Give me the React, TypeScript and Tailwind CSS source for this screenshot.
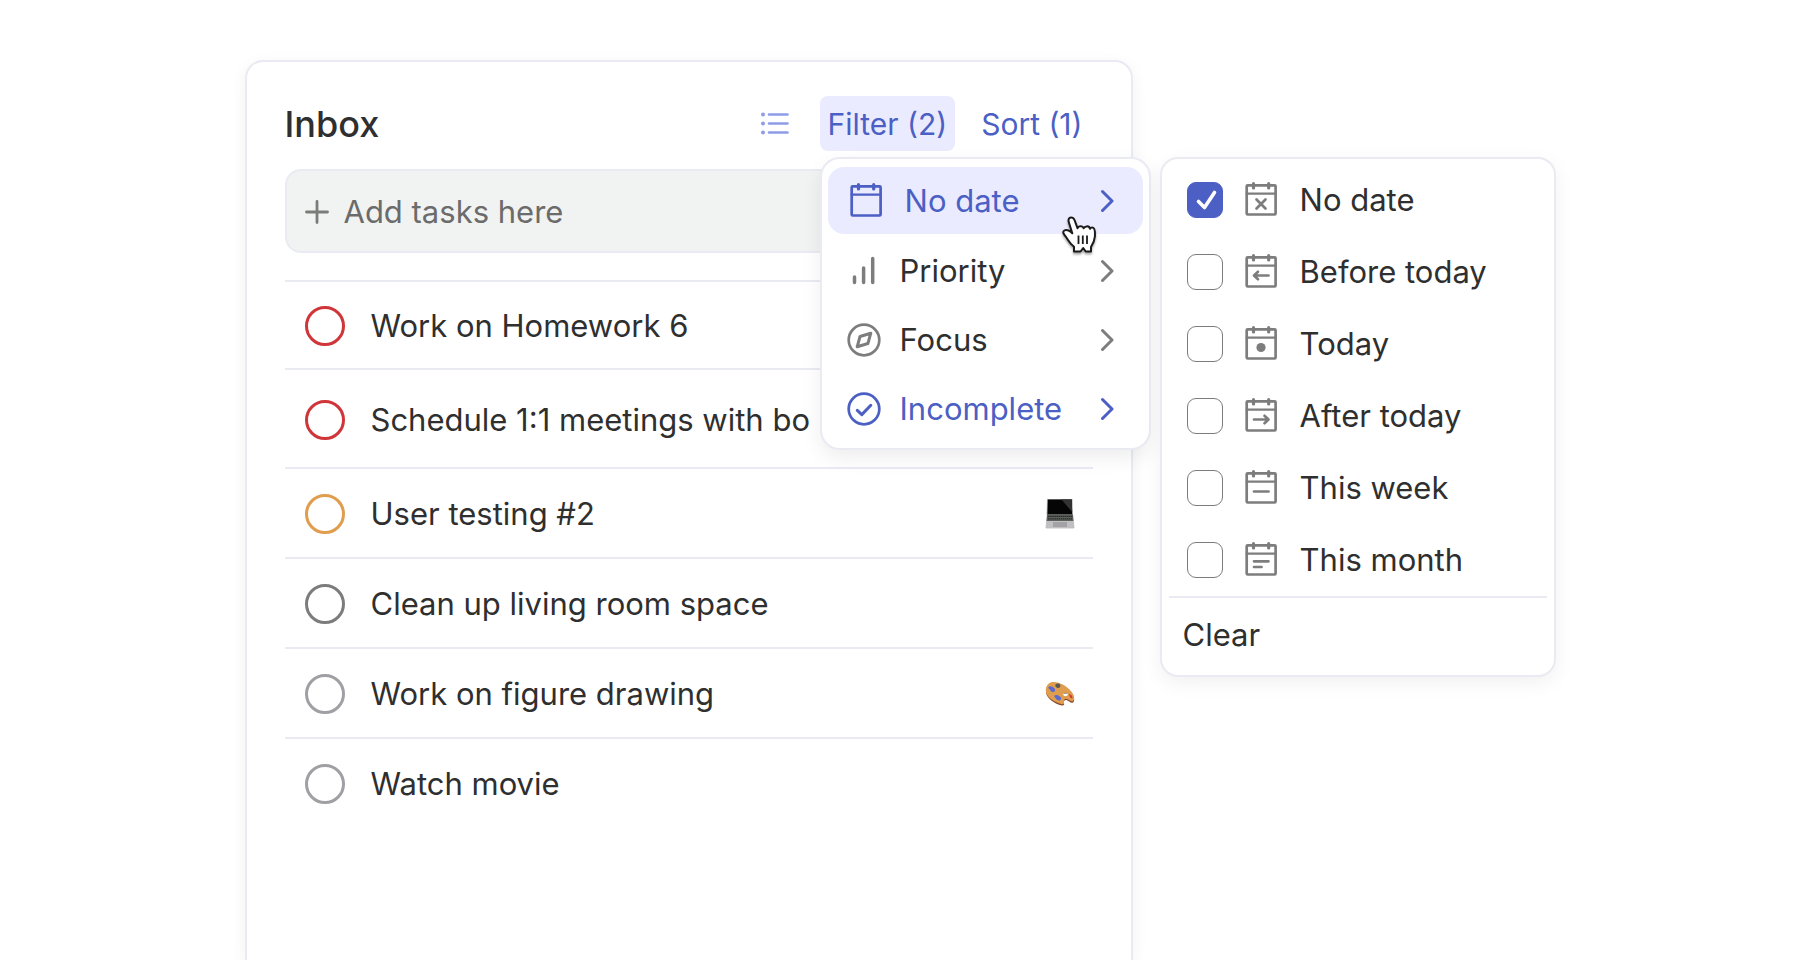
import { useState, type ReactNode } from "react";

type Task = { title: string; ring: string; height: string; tag?: ReactNode };

function LaptopIcon() {
  return (
    <svg viewBox="0 0 30 32" className="h-8 w-[30px]" aria-hidden="true">
      <path d="M2 1h25.500l.5 16H1.500z" fill="#b4b4b4" />
      <path d="M2.800 1.500h24l.4 15H2.400z" fill="#050505" />
      <path d="M16.500 1.500h10.300l.3 12.500z" fill="#333" />
      <path d="M2 16.500h26l.7 7H1.300z" fill="#5c605b" />
      <path d="M3 18.300h24M3 20.800h24" stroke="#2b2d2b" strokeWidth="1.200" strokeDasharray="1.600 .5" />
      <path d="M1.300 23h27.400l.8 7H.5z" fill="#c0c0c3" />
      <path d="M8 24h14v5H8z" fill="#a3a3a6" />
      <path d="M.5 30h29l-.8 1H1.300z" fill="#e3e3e4" />
    </svg>
  );
}

function PaletteIcon() {
  return (
    <svg viewBox="0 0 30 26" className="h-[26px] w-[30px]" aria-hidden="true">
      <path d="M1 10C0 16 9 23 17 24.500c2 .3 2.500-1 2-2.500-.6-2 .6-3.500 2.500-3 2 .8 4.500 3.500 6.500 2.500 2-1.200 1.500-6-1.500-10C22 5.500 14 1 7.500 1.800 4 2.300 1.400 5 1 10z" fill="#8a4a2a" />
      <path d="M.8 9C0 15 9 21.500 17 23.200c1.600.3 2.300-.6 2-2.200-.5-2.200.7-3.800 2.800-3 2 .7 4.500 3 6.200 2 2-1.300 1.300-5.500-1.500-9.200C22 5 14 .5 7.500 1 4 1.400 1.200 4.200.8 9z" fill="#df9d4d" />
      <ellipse cx="20.500" cy="13.500" rx="2.200" ry="1.700" fill="#fff" />
      <path d="M18.500 12.600c.6-1.300 3-1.300 4 0-1.300-.2-2.700-.3-4 0z" fill="#444" />
      <path d="M3.500 6c1.500-1.500 3.500-.5 5 .6 1.600 1.200 2.400 3.400.6 4.200-2 .8-3.300-.6-4-1.900-.7-1-2.400-1.800-1.600-2.900z" fill="#5a6bd0" />
      <path d="M9.500 14.500c1.500-1.200 3.800-.4 5.500 1 1.500 1.300 1.500 3.600-.4 3.900-2 .3-3-.6-3.700-1.900-.6-1-2.300-2-1.400-3z" fill="#5a6bd0" />
      <path d="M10.500 3.500c1-1.400 3.600-1.300 4.700.3.800 1.300-.2 3.200-2 3.200-1.900 0-3.500-1.900-2.700-3.500z" fill="#5b5a52" />
      <path d="M23.800 12.800l3 1.700.8 2.700-2.200-.3z" fill="#cf3b30" />
    </svg>
  );
}

type Mark = "none" | "x" | "left" | "dot" | "right" | "week" | "month";

const marks: Record<Mark, ReactNode> = {
  none: null,
  x: <path d="M11.500 18.500l9 9M20.500 18.500l-9 9" />,
  left: <path d="M9 22.500h14.500M13 18.800l-4 3.700 4 3.700" />,
  dot: <circle cx="16" cy="22.500" r="4.600" fill="currentColor" stroke="none" />,
  right: <path d="M9 22.500h14.500M19.500 18.800l4 3.700-4 3.700" />,
  week: <path d="M9 22.500h14.500" />,
  month: <path d="M9 20.300h14.500M9 26h7.500" />,
};

function CalendarIcon({ mark }: { mark: Mark }) {
  return (
    <svg
      viewBox="0 1 32 36"
      className="h-9 w-8 shrink-0"
      fill="none"
      stroke="currentColor"
      strokeWidth="2.700"
      strokeLinecap="round"
      strokeLinejoin="round"
      aria-hidden="true"
    >
      <rect x="1.700" y="4.300" width="28.900" height="29.200" rx="1" />
      <path d="M1.700 12.700h28.900" strokeWidth="2.300" />
      <path d="M8.500 2.700v4.300M23.700 2.700v4.300" strokeWidth="3.200" />
      {marks[mark]}
    </svg>
  );
}

function PriorityIcon() {
  return (
    <svg viewBox="0 0 34 34" className="size-[34px]" stroke="currentColor" strokeWidth="3.500" strokeLinecap="round" aria-hidden="true">
      <path d="M7.500 23v5.500M16.600 14v14.500M25.700 4.500v24" />
    </svg>
  );
}

function FocusIcon() {
  return (
    <svg viewBox="0 0 34 34" className="size-[34px]" fill="none" stroke="currentColor" strokeWidth="2.700" strokeLinejoin="round" aria-hidden="true">
      <circle cx="17" cy="17" r="15.300" />
      <path d="M10.200 23.800l2.800-10.300 10.800-3.300-2.900 10.300z" strokeWidth="3" />
    </svg>
  );
}

function DoneIcon() {
  return (
    <svg viewBox="0 0 34 34" className="size-[34px]" fill="none" stroke="currentColor" strokeWidth="2.700" strokeLinecap="round" strokeLinejoin="round" aria-hidden="true">
      <circle cx="17" cy="17" r="15.300" />
      <path d="M10.300 18.300l4.500 4.300 9-9.300" strokeWidth="3" />
    </svg>
  );
}

function Chevron() {
  return (
    <svg viewBox="0 0 14 24" className="ml-auto h-6 w-3.5" fill="none" stroke="currentColor" strokeWidth="3" strokeLinecap="round" strokeLinejoin="round" aria-hidden="true">
      <path d="M2.500 2.500l9.500 9.500-9.500 9.500" />
    </svg>
  );
}

function HandCursor() {
  return (
    <svg viewBox="0 0 36 40" className="pointer-events-none absolute top-14 left-[239px] z-10 h-10 w-9 drop-shadow-[0_2px_1px_rgba(0,0,0,0.35)]" aria-hidden="true">
      <path
        d="M9 2.800C7.200 3.500 7.300 5.500 7.900 7.500L11.300 18.300C9.500 16.200 5.800 13.800 3.300 15.500c-2.300 1.700-.3 3.900 1.700 6.500 2.500 3.600 3.500 6.500 8 9.800V36.500h6.500l2.700-3.500 2.500 3.500h5.300V32c2.200-3.500 3.600-6.500 3.900-10.500.2-4 .1-7.500-1.400-8.500-1.400-.9-3-.3-3.500.7-.4-1.700-1.900-2.600-3.600-2.300-1.500.2-2.500.9-2.700 1.900-.6-1.500-1.900-2.200-3.400-2-1.500.1-2.500.8-2.800 1.900L13.700 5.500C12.800 3 11 2 9 2.800z"
        fill="#fff"
        stroke="#1a1a1a"
        strokeWidth="2"
        strokeLinejoin="round"
      />
      <path d="M17.500 20.500v8.500M21.800 20.500v8.500M26 20.500v8.500" stroke="#1a1a1a" strokeWidth="1.800" />
    </svg>
  );
}

const tasks: Task[] = [
  { title: "Work on Homework 6", ring: "border-[#cf3539]", height: "h-[88px]" },
  { title: "Schedule 1:1 meetings with bo", ring: "border-[#cf3539]", height: "h-[99px]" },
  { title: "User testing #2", ring: "border-[#df9d4d]", height: "h-[90px]", tag: <LaptopIcon /> },
  { title: "Clean up living room space", ring: "border-[#7c7c7c]", height: "h-[90px]" },
  { title: "Work on figure drawing", ring: "border-[#a0a0a4]", height: "h-[90px]", tag: <PaletteIcon /> },
  { title: "Watch movie", ring: "border-[#a0a0a4]", height: "h-[90px]" },
];

const filters = [
  { label: "Priority", icon: <PriorityIcon />, active: false },
  { label: "Focus", icon: <FocusIcon />, active: false },
  { label: "Incomplete", icon: <DoneIcon />, active: true },
];

const dates: { label: string; mark: Mark }[] = [
  { label: "No date", mark: "x" },
  { label: "Before today", mark: "left" },
  { label: "Today", mark: "dot" },
  { label: "After today", mark: "right" },
  { label: "This week", mark: "week" },
  { label: "This month", mark: "month" },
];

function DateMenu() {
  const [picked, setPicked] = useState<string[]>(["No date"]);
  const toggle = (label: string) =>
    setPicked((now) => (now.includes(label) ? now.filter((item) => item !== label) : [...now, label]));

  return (
    <div className="absolute -top-0.5 left-full ml-[11px] w-[396px] rounded-[18px] border-2 border-[#eaeaf2] bg-white px-[7px] pt-[5px] pb-1 shadow-[0_6px_20px_rgba(0,0,0,0.06)]">
      {dates.map(({ label, mark }) => (
        <label key={label} className="flex h-[72px] items-center pl-[18px] text-[#2f2f2f]">
          <span className="relative flex size-9 items-center justify-center">
            <input
              type="checkbox"
              checked={picked.includes(label)}
              onChange={() => toggle(label)}
              className="peer size-9 appearance-none rounded-[9px] border border-[#7c7c7c] bg-white checked:border-[#4b5fc4] checked:bg-[#4b5fc4]"
            />
            <svg viewBox="0 0 36 36" className="pointer-events-none absolute inset-0 hidden size-9 peer-checked:block" fill="none" stroke="#fff" strokeWidth="3.600" strokeLinecap="round" strokeLinejoin="round" aria-hidden="true">
              <path d="M11.500 19.500l6 6 10-15" />
            </svg>
          </span>
          <span className="ml-[22px] text-[#7d7d7d]">
            <CalendarIcon mark={mark} />
          </span>
          <span className="ml-[23px]">{label}</span>
        </label>
      ))}
      <div className="border-t-2 border-[#eaeaf2]">
        <button type="button" onClick={() => setPicked([])} className="flex h-[73px] w-full items-center pl-3.5 text-[#2f2f2f]">
          Clear
        </button>
      </div>
    </div>
  );
}

function FilterMenu() {
  return (
    <div className="absolute top-full left-0 mt-1.5 w-[331px] rounded-[20px] border-2 border-[#eaeaf2] bg-white px-1.5 pt-2 pb-1.5 shadow-[0_8px_20px_rgba(0,0,0,0.07)]">
      <button type="button" className="mb-[3px] flex h-[67px] w-full items-center gap-[23px] rounded-2xl bg-[#eaebff] pr-[29px] pl-[22px] text-[#4b5fc4]">
        <CalendarIcon mark="none" />
        No date
        <Chevron />
      </button>
      <div className="flex flex-col gap-0.5">
        {filters.map(({ label, icon, active }) => (
          <button
            key={label}
            type="button"
            className={`flex h-[67px] w-full items-center gap-[19px] pr-[29px] pl-[19px] ${active ? "text-[#4b5fc4]" : "text-[#7d7d7d]"}`}
          >
            {icon}
            <span className={active ? "text-[#4b5fc4]" : "text-[#2f2f2f]"}>{label}</span>
            <Chevron />
          </button>
        ))}
      </div>
      <HandCursor />
      <DateMenu />
    </div>
  );
}

export default function App() {
  return (
    <main className="flex min-h-screen justify-center overflow-hidden bg-white pt-[60px] font-['Inter',sans-serif] text-[31px] leading-9 text-[#2f2f2f]">
      <div className="flex w-full max-w-[1311px]">
        <section className="w-[888px] shrink-0 rounded-t-[18px] border-2 border-b-0 border-[#eaeaf2] px-[38px] pt-[34px] shadow-[0_4px_16px_rgba(0,0,0,0.06)]">
          <header className="flex items-center">
            <h1 className="text-4xl font-medium">Inbox</h1>
            <button type="button" aria-label="List view" className="ml-auto text-[#8f9ce6]">
              <svg viewBox="0 0 30 24" className="h-6 w-[30px]" fill="none" stroke="currentColor" strokeWidth="2.600" strokeLinecap="round" aria-hidden="true">
                <path d="M9 2.500h18.500M9 11.500h18.500M9 20.500h18.500" />
                <path d="M3 2.500h.01M3 11.500h.01M3 20.500h.01" strokeWidth="4" />
              </svg>
            </button>
            <div className="relative z-10 ml-[30px]">
              <button type="button" className="flex h-[55px] items-center rounded-lg bg-[#eaebff] px-2 text-3xl text-[#4b5fc4]">
                Filter (2)
              </button>
              <FilterMenu />
            </div>
            <button type="button" className="mr-2.5 ml-[26px] text-3xl text-[#4b5fc4]">
              Sort (1)
            </button>
          </header>

          <label className="mt-[18px] flex h-[84px] items-center rounded-2xl border-2 border-[#eaeaf2] bg-[#f1f3f2] pt-0.5 pl-[17px]">
            <svg viewBox="0 0 26 26" className="size-[26px] shrink-0" stroke="#7a7c79" strokeWidth="2.800" strokeLinecap="round" aria-hidden="true">
              <path d="M13 2.500v21M2.500 13h21" />
            </svg>
            <input
              type="text"
              aria-label="Add tasks"
              placeholder="Add tasks here"
              className="ml-3.5 w-full min-w-0 bg-transparent outline-none placeholder:text-[#6b6b6b] placeholder:opacity-100"
            />
          </label>

          <ul className="mt-[27px]">
            {tasks.map(({ title, ring, height, tag }) => (
              <li key={title} className={`flex items-center border-t-2 border-[#eaeaf2] pt-0.5 pr-[18px] pl-5 ${height}`}>
                <label className="flex items-center gap-[26px] whitespace-nowrap">
                  <input type="checkbox" className={`size-10 shrink-0 appearance-none rounded-full border-[3px] ${ring}`} />
                  {title}
                </label>
                {tag && <span className="ml-auto">{tag}</span>}
              </li>
            ))}
          </ul>
        </section>
      </div>
    </main>
  );
}
